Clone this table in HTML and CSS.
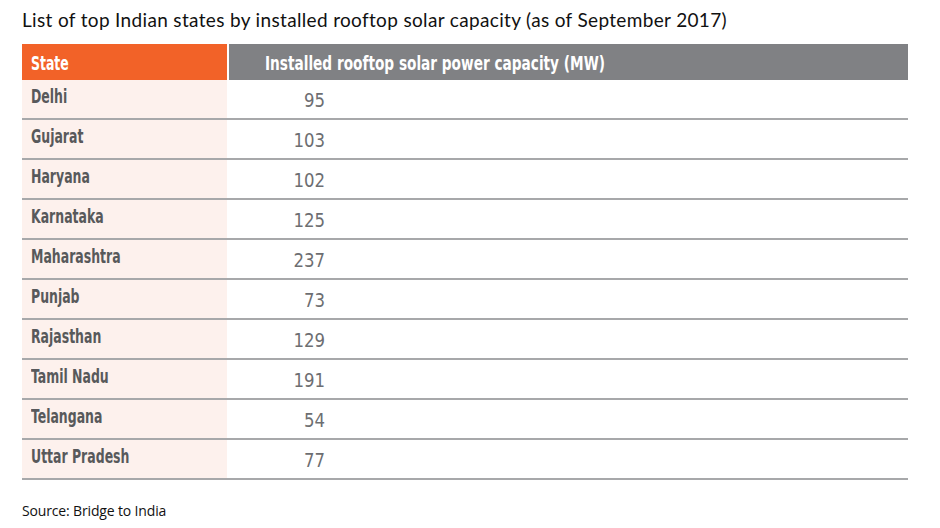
FILE: index.html
```html
<!DOCTYPE html>
<html lang="en">
<head>
<meta charset="utf-8">
<title>Rooftop solar capacity</title>
<link rel="stylesheet" href="styles.css">
</head>
<body>
<div class="page">
  <h1 class="title">List of top Indian states by installed rooftop solar capacity (as of September 2017)</h1>
  <div class="table">
    <div class="head">
      <div class="hcell hstate"><span class="label">State</span></div>
      <div class="hcell hvalue"><span class="label label-wide">Installed rooftop solar power capacity (MW)</span></div>
    </div>
    <div class="row"><div class="state"><span class="label">Delhi</span></div><div class="value"><span class="num">95</span></div></div>
    <div class="row"><div class="state"><span class="label">Gujarat</span></div><div class="value"><span class="num">103</span></div></div>
    <div class="row"><div class="state"><span class="label">Haryana</span></div><div class="value"><span class="num">102</span></div></div>
    <div class="row"><div class="state"><span class="label">Karnataka</span></div><div class="value"><span class="num">125</span></div></div>
    <div class="row"><div class="state"><span class="label">Maharashtra</span></div><div class="value"><span class="num">237</span></div></div>
    <div class="row"><div class="state"><span class="label">Punjab</span></div><div class="value"><span class="num">73</span></div></div>
    <div class="row"><div class="state"><span class="label">Rajasthan</span></div><div class="value"><span class="num">129</span></div></div>
    <div class="row"><div class="state"><span class="label">Tamil Nadu</span></div><div class="value"><span class="num">191</span></div></div>
    <div class="row"><div class="state"><span class="label">Telangana</span></div><div class="value"><span class="num">54</span></div></div>
    <div class="row"><div class="state"><span class="label">Uttar Pradesh</span></div><div class="value"><span class="num">77</span></div></div>
  </div>
  <p class="source">Source: Bridge to India</p>
</div>
</body>
</html>
```

FILE: styles.css
```css
html, body {
  margin: 0;
  padding: 0;
  background: #ffffff;
}

.page {
  width: 886px;
  padding: 0 0 0 22px;
}

.title {
  margin: 0;
  padding-top: 9px;
  height: 44px;
  box-sizing: border-box;
  font-family: Lato, "Open Sans", sans-serif;
  font-weight: 400;
  font-size: 19px;
  letter-spacing: 0.34px;
  line-height: 22px;
  color: #111111;
  white-space: nowrap;
}

.table {
  display: flex;
  flex-direction: column;
  font-family: "DejaVu Sans Condensed", "DejaVu Sans", sans-serif;
  font-stretch: condensed;
}

.label {
  display: inline-block;
  white-space: nowrap;
  transform: scaleX(0.73);
  transform-origin: left center;
}

.label-wide {
  transform: scaleX(0.8);
}

.head {
  display: flex;
  gap: 2px;
  height: 36px;
}

.hcell {
  color: #ffffff;
  font-weight: 700;
  font-size: 19px;
  line-height: 36px;
  padding-top: 1px;
  box-sizing: border-box;
}

.hstate {
  width: 205px;
  background: #f26228;
  padding-left: 9px;
}

.hvalue {
  flex: 1;
  background: #808184;
  padding-left: 36px;
}

.row {
  display: flex;
  height: 40px;
  border-bottom: 2px solid #a7a8aa;
  box-sizing: border-box;
}

.state {
  width: 205px;
  background: #fdf1ed;
  padding: 4px 0 0 9px;
  box-sizing: border-box;
  color: #58595b;
  font-weight: 700;
  font-size: 19px;
  line-height: 24px;
}

.value {
  flex: 1;
  padding-top: 8px;
  color: #6d6e71;
  font-weight: 400;
  font-size: 20px;
  line-height: 24px;
}

.num {
  display: block;
  width: 98px;
  text-align: right;
  transform: scaleX(0.92);
  transform-origin: right center;
}

.source {
  margin: 22px 0 0;
  font-family: "Open Sans", sans-serif;
  font-size: 14px;
  letter-spacing: -0.15px;
  line-height: 18px;
  color: #111111;
}
```
